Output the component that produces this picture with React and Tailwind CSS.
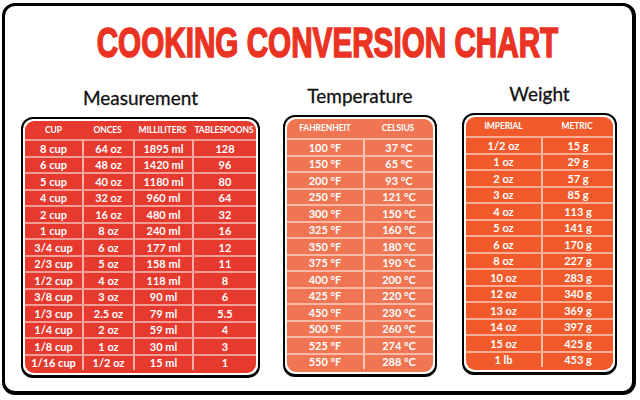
import React from 'react'

const measureRows = [
  ['8 cup', '64 oz', '1895 ml', '128'],
  ['6 cup', '48 oz', '1420 ml', '96'],
  ['5 cup', '40 oz', '1180 ml', '80'],
  ['4 cup', '32 oz', '960 ml', '64'],
  ['2 cup', '16 oz', '480 ml', '32'],
  ['1 cup', '8 oz', '240 ml', '16'],
  ['3/4 cup', '6 oz', '177 ml', '12'],
  ['2/3 cup', '5 oz', '158 ml', '11'],
  ['1/2 cup', '4 oz', '118 ml', '8'],
  ['3/8 cup', '3 oz', '90 ml', '6'],
  ['1/3 cup', '2.5 oz', '79 ml', '5.5'],
  ['1/4 cup', '2 oz', '59 ml', '4'],
  ['1/8 cup', '1 oz', '30 ml', '3'],
  ['1/16 cup', '1/2 oz', '15 ml', '1']
]

const tempRows = [
  [100, 37], [150, 65], [200, 93], [250, 121], [300, 150], [325, 160], [350, 180],
  [375, 190], [400, 200], [425, 220], [450, 230], [500, 260], [525, 274], [550, 288]
].map(function (r) { return [r[0] + ' °F', r[1] + ' °C'] })

const weightRows = [
  ['1/2 oz', '15 g'], ['1 oz', '29 g'], ['2 oz', '57 g'], ['3 oz', '85 g'],
  ['4 oz', '113 g'], ['5 oz', '141 g'], ['6 oz', '170 g'], ['8 oz', '227 g'],
  ['10 oz', '283 g'], ['12 oz', '340 g'], ['13 oz', '369 g'], ['14 oz', '397 g'],
  ['15 oz', '425 g'], ['1 lb', '453 g']
]

// one rounded chart card: black outline, white ring, coloured body with white grid lines
function ChartTable({ bg, cols, head, rows, headH }) {
  return (
    <div className="rounded-[12px] border-2 border-b-[3px] border-black bg-white p-[2px]">
      <div className={'overflow-hidden rounded-[9px] pb-[3px] text-white ' + bg}>
        <div className={'flex items-center ' + headH}>
          {head.map(function (h, i) {
            return (
              <div key={h} className={cols[i] + ' text-center text-[8.5px] font-bold tracking-[-0.1px]'}>
                {h}
              </div>
            )
          })}
        </div>
        {rows.map(function (r, ri) {
          return (
            <div key={ri} className="flex h-[16.5px] border-t-2 border-white/50">
              {r.map(function (c, i) {
                return (
                  <div
                    key={i}
                    className={cols[i] + ' flex items-center justify-center text-[11px] font-bold leading-none ' + (i > 0 ? 'border-l-2 border-white/60' : '')}
                  >
                    {c}
                  </div>
                )
              })}
            </div>
          )
        })}
      </div>
    </div>
  )
}

export default function App() {
  return (
    <div className="h-[400px] w-[640px] overflow-hidden bg-white pl-[2px] pt-[3px] font-['Lato','Liberation_Sans',sans-serif]">
      <div className="flex h-[392px] w-[634px] flex-col rounded-[13px] border-[3px] border-r-4 border-b-4 border-black bg-white">
        <div className="flex justify-center pl-[18px] pt-[15px]">
          <h1 className="inline-block scale-x-[0.69] whitespace-nowrap font-['Liberation_Sans',Arial,sans-serif] text-[43px] font-bold leading-[43px] text-[#eb3323] [-webkit-text-stroke:1.6px_#eb3323]">
            COOKING CONVERSION CHART
          </h1>
        </div>

        <div className="mt-[18px] flex items-start pl-[16px]">
          <div className="mt-[4px] w-[239px]">
            <h2 className="text-center text-[19px] leading-[23px] text-[#111] [-webkit-text-stroke:0.3px_#111]">Measurement</h2>
            <div className="mt-[8px]">
              <ChartTable
                bg="bg-[#e73a2f]"
                headH="h-[18px]"
                cols={['w-[57px]', 'w-[51px]', 'w-[59px]', 'flex-1']}
                head={['CUP', 'ONCES', 'MILLILITERS', 'TABLESPOONS']}
                rows={measureRows}
              />
            </div>
          </div>

          <div className="ml-[23px] mt-[2px] w-[154px]">
            <h2 className="text-center text-[19px] leading-[23px] text-[#111] [-webkit-text-stroke:0.3px_#111]">Temperature</h2>
            <div className="mt-[8px]">
              <ChartTable
                bg="bg-[#ef7553]"
                headH="h-[19px]"
                cols={['w-[76px]', 'flex-1']}
                head={['FAHRENHEIT', 'CELSIUS']}
                rows={tempRows}
              />
            </div>
          </div>

          <div className="ml-[25px] w-[155px]">
            <h2 className="text-center text-[19px] leading-[23px] text-[#111] [-webkit-text-stroke:0.3px_#111]">Weight</h2>
            <div className="mt-[8px]">
              <ChartTable
                bg="bg-[#f15a2a]"
                headH="h-[19px]"
                cols={['w-[75px]', 'flex-1']}
                head={['IMPERIAL', 'METRIC']}
                rows={weightRows}
              />
            </div>
          </div>
        </div>
      </div>
    </div>
  )
}
